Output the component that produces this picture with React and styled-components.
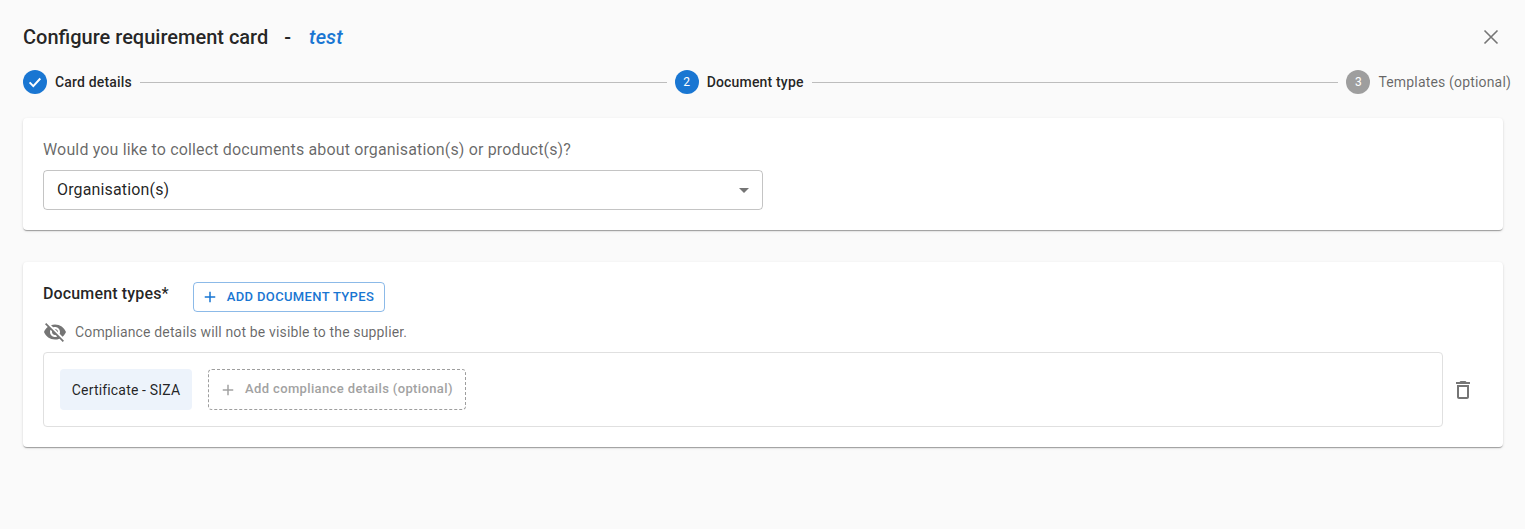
import React from 'react';
import styled, { createGlobalStyle } from 'styled-components';

const Global = createGlobalStyle`
  html, body { margin: 0; padding: 0; background: #fafafa; }
  body { font-family: Roboto, "Liberation Sans", sans-serif; color: rgba(0,0,0,.87); }
  * { box-sizing: border-box; }
`;
const Page = styled.div`
  width: 1525px; height: 529px; padding: 25px 22px 0 23px; background: #fafafa; overflow: hidden;
`;
const Header = styled.header`
  display: flex; align-items: center; justify-content: space-between; height: 24px;
`;
const Title = styled.h1`
  margin: 0; font-size: 20px; font-weight: 500; line-height: 24px; color: rgba(0,0,0,.87);
  display: flex; align-items: baseline;
`;
const Dash = styled.span`margin: 0 18px 0 16px;`;
const Name = styled.em`font-weight: 500; color: #1976d2; letter-spacing: .1px;`;
const CloseBtn = styled.button`
  display: flex; width: 24px; height: 24px; padding: 0; border: 0; background: none; color: #757575;
`;
const Stepper = styled.div`
  display: flex; align-items: center; height: 24px; margin: 21px -8px 24px 0;
`;
const Step = styled.div`display: flex; align-items: center; gap: 8px;`;
const Badge = styled.span`
  width: 24px; height: 24px; border-radius: 50%; display: flex; align-items: center; justify-content: center;
  background: ${p => (p.$active ? '#1976d2' : '#9e9e9e')}; color: #fff; font-size: 12px; line-height: 1;
`;
const StepLabel = styled.span`
  font-size: 14px; line-height: 20px; letter-spacing: .17px; font-weight: ${p => (p.$active ? 500 : 400)};
  color: ${p => (p.$active ? 'rgba(0,0,0,.87)' : 'rgba(0,0,0,.6)')};
`;
const Connector = styled.span`flex: 1; height: 1px; background: #bdbdbd; margin: 0 8px;`;
const Card = styled.section`
  background: #fff; border-radius: 4px; padding: 20px;
  box-shadow: 0 2px 1px -1px rgba(0,0,0,.2), 0 1px 1px 0 rgba(0,0,0,.14), 0 1px 3px 0 rgba(0,0,0,.12);
  & + & { margin-top: 32px; }
`;
const Question = styled.p`
  margin: 0 0 8px; font-size: 16px; line-height: 24px; letter-spacing: .15px; color: rgba(0,0,0,.6);
`;
const Select = styled.div`
  width: 720px; height: 40px; border: 1px solid rgba(0,0,0,.23); border-radius: 4px;
  display: flex; align-items: center; justify-content: space-between; padding: 0 6px 0 13px;
  font-size: 16px; letter-spacing: .15px; color: rgba(0,0,0,.87);
`;
const SelectValue = styled.span`margin-top: -2px;`;
const Arrow = styled.svg`width: 24px; height: 24px; fill: #757575;`;
const TypesHead = styled.div`display: flex; align-items: center; gap: 24px; height: 30px;`;
const TypesTitle = styled.h2`
  margin: -6px 0 0; font-size: 16px; font-weight: 500; line-height: 24px; letter-spacing: .15px; color: rgba(0,0,0,.87);
`;
const AddBtn = styled.button`
  display: flex; align-items: center; height: 30px; width: 192px; padding: 0 0 0 7px; gap: 8px; background: none;
  border: 1px solid rgba(25,118,210,.5); border-radius: 4px; color: #1976d2;
  font: 500 13px/22px Roboto, sans-serif; letter-spacing: .35px; text-transform: uppercase; white-space: nowrap;
`;
const AddLabel = styled.span`margin-top: -1px;`;
const PlusIcon = styled.svg`width: 18px; height: 18px; fill: currentColor; flex: none;`;
const Hint = styled.div`
  display: flex; align-items: center; gap: 8px; height: 24px; margin: 8px 0;
  font-size: 14px; line-height: 20px; letter-spacing: .15px; color: rgba(0,0,0,.6);
`;
const HintIcon = styled.svg`width: 24px; height: 24px; fill: #757575; flex: none;`;
const Row = styled.div`display: flex; align-items: center; gap: 8px; padding-right: 8px;`;
const Entry = styled.div`
  flex: 1; height: 75px; border: 1px solid #e0e0e0; border-radius: 4px; padding: 0 16px;
  display: flex; align-items: center; gap: 16px;
`;
const Chip = styled.div`
  height: 41px; width: 132px; display: flex; align-items: center; justify-content: center;
  background: #edf3fb; border-radius: 4px; font-size: 14px; letter-spacing: .17px; color: rgba(0,0,0,.87);
`;
const Dashed = styled.button`
  height: 41px; width: 258px; display: flex; align-items: center; gap: 8px; padding: 0 10px;
  background: none; border: 1px dashed #9e9e9e; border-radius: 4px; color: #a2a2a2;
  font: 500 13px/20px Roboto, sans-serif; letter-spacing: .37px; white-space: nowrap;
`;
const DashedLabel = styled.span`margin-top: -2px;`;
const TrashBtn = styled.button`
  display: flex; width: 24px; height: 24px; padding: 0; border: 0; background: none;
`;
const ActionIcon = styled.svg`width: 24px; height: 24px; fill: #757575;`;

const add = 'M19 13h-6v6h-2v-6H5v-2h6V5h2v6h6v2z';

export default function App() {
  return (
    <Page>
      <Global />
      <Header>
        <Title>Configure requirement card<Dash>-</Dash><Name>test</Name></Title>
        <CloseBtn aria-label="Close">
          <svg width="24" height="24" viewBox="0 0 24 24" fill="none" stroke="currentColor" strokeWidth="1.6">
            <path d="M5.5 5.5l13 13M18.5 5.5l-13 13" />
          </svg>
        </CloseBtn>
      </Header>
      <Stepper>
        <Step>
          <Badge $active>
            <svg width="14" height="14" viewBox="0 0 14 14" fill="none" stroke="#fff" strokeWidth="2">
              <path d="M1.6 7.4l3.7 3.7 7-7.6" />
            </svg>
          </Badge>
          <StepLabel $active>Card details</StepLabel>
        </Step>
        <Connector />
        <Step>
          <Badge $active>2</Badge>
          <StepLabel $active>Document type</StepLabel>
        </Step>
        <Connector />
        <Step>
          <Badge>3</Badge>
          <StepLabel>Templates (optional)</StepLabel>
        </Step>
      </Stepper>
      <Card>
        <Question>Would you like to collect documents about organisation(s) or product(s)?</Question>
        <Select>
          <SelectValue>Organisation(s)</SelectValue>
          <Arrow viewBox="0 0 24 24"><path d="M7 10l5 5 5-5z" /></Arrow>
        </Select>
      </Card>
      <Card>
        <TypesHead>
          <TypesTitle>Document types*</TypesTitle>
          <AddBtn><PlusIcon viewBox="0 0 24 24"><path d={add} /></PlusIcon><AddLabel>Add document types</AddLabel></AddBtn>
        </TypesHead>
        <Hint>
          <HintIcon viewBox="0 0 24 24">
            <path d="M12 7c2.76 0 5 2.24 5 5 0 .65-.13 1.26-.36 1.83l2.92 2.92c1.51-1.26 2.7-2.89 3.43-4.75-1.73-4.39-6-7.5-11-7.5-1.4 0-2.74.25-3.98.7l2.16 2.16C10.74 7.13 11.35 7 12 7zM2 4.27l2.28 2.28.46.46C3.08 8.3 1.78 10.02 1 12c1.73 4.39 6 7.5 11 7.5 1.55 0 3.03-.3 4.38-.84l.42.42L19.73 22 21 20.73 3.27 3 2 4.27zM7.53 9.8l1.55 1.55c-.05.21-.08.43-.08.65 0 1.66 1.34 3 3 3 .22 0 .44-.03.65-.08l1.55 1.55c-.67.33-1.41.53-2.2.53-2.76 0-5-2.24-5-5 0-.79.2-1.53.53-2.2zm4.31-.78l3.15 3.15.02-.16c0-1.66-1.34-3-3-3l-.17.01z" />
          </HintIcon>
          Compliance details will not be visible to the supplier.
        </Hint>
        <Row>
          <Entry>
            <Chip>Certificate - SIZA</Chip>
            <Dashed>
              <PlusIcon viewBox="0 0 24 24"><path d={add} /></PlusIcon>
              <DashedLabel>Add compliance details (optional)</DashedLabel>
            </Dashed>
          </Entry>
          <TrashBtn aria-label="Delete">
            <ActionIcon viewBox="0 0 24 24">
              <path d="M6 19c0 1.1.9 2 2 2h8c1.1 0 2-.9 2-2V7H6v12zM8 9h8v10H8V9zm7.5-5l-1-1h-5l-1 1H5v2h14V4z" />
            </ActionIcon>
          </TrashBtn>
        </Row>
      </Card>
    </Page>
  );
}
